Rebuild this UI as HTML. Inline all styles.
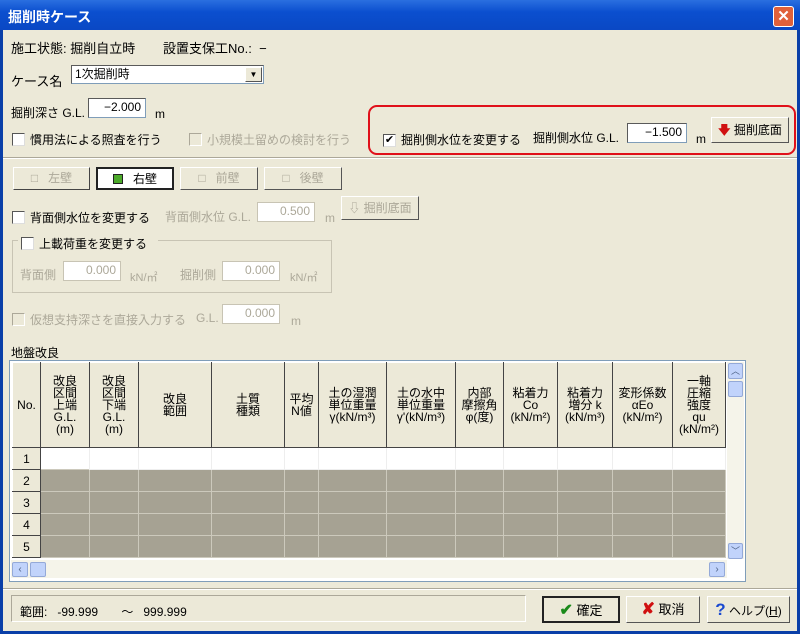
<!DOCTYPE html>
<html><head><meta charset="utf-8"><style>
*{box-sizing:border-box;margin:0;padding:0}
body{width:800px;height:634px;overflow:hidden;background:#0a3fa8;font-family:"Liberation Sans","Noto Sans CJK JP",sans-serif;font-size:12px;color:#000;position:relative}
.a{position:absolute}
#win{left:3px;top:30px;width:794px;height:601px;background:#ece9d8}
#title{left:0;top:0;width:800px;height:30px;background:linear-gradient(#2a6fe0,#0b4fcf 40%,#0a48c4);color:#fff;font-weight:bold;font-size:14px;padding:7px 0 0 8px}
.t{position:absolute;white-space:nowrap}
.g{color:#aca899}
.in{position:absolute;background:#fff;border:1px solid #7f9db9;border-top-color:#5a5a5a;border-left-color:#5a5a5a;text-align:right;padding-right:4px;font-size:12px;line-height:17px}
.in.d{background:#fff;color:#aca899;border-color:#c8c4b4}
.cb{position:absolute;width:13px;height:13px;background:#fff;border:1px solid #555;border-right-color:#ddd;border-bottom-color:#ddd}
.cb.d{background:#ece9d8;border-color:#aca899 #fff #fff #aca899}
.btn{position:absolute;background:#ece9d8;border:1px solid;border-color:#fff #555 #555 #fff;text-align:center}
table{border-collapse:collapse;position:absolute;left:12px;top:362px;table-layout:fixed}
td{border:1px solid #fff;height:22px;padding:0;font-size:11px}
th{background:#ece9d8;border:1px solid #444;border-top-color:#fff;border-left-color:#fff;font-weight:normal;font-size:12px;line-height:12px;height:85px;vertical-align:middle;text-align:center;overflow:hidden;white-space:nowrap}
.no{background:#ece9d8;border:1px solid #444;border-top-color:#fff;border-left-color:#fff;text-align:center;font-size:12px}
.gr{background:#a6a293;border-color:#ccc9bc}
.wh{background:#fff;border-color:#eee}
</style></head><body>
<div class="a" id="title">掘削時ケース</div>
<div class="a" style="left:773px;top:6px;width:21px;height:21px;background:#e0603a;border:1px solid #fff;border-radius:3px;color:#fff;font-weight:bold;text-align:center;font-size:15px;line-height:19px">✕</div>
<div class="a" id="win"></div>
<div class="t" style="left:11px;top:38px;font-size:13px">施工状態: 掘削自立時</div>
<div class="t" style="left:163px;top:38px;font-size:13px">設置支保工No.: &nbsp;−</div>
<div class="t" style="left:11px;top:71px;font-size:13px">ケース名</div>
<div class="in" style="left:71px;top:65px;width:193px;height:19px;text-align:left;padding-left:3px">1次掘削時</div>
<div class="btn" style="left:245px;top:67px;width:17px;height:15px;font-size:8px;line-height:13px">▼</div>
<div class="t" style="left:11px;top:104px">掘削深さ G.L.</div>
<div class="in" style="left:88px;top:98px;width:58px;height:20px">−2.000</div>
<div class="t" style="left:155px;top:107px">m</div>
<div class="cb" style="left:12px;top:133px"></div><div class="t" style="left:30px;top:131px;font-size:12px">慣用法による照査を行う</div>
<div class="cb d" style="left:189px;top:133px"></div><div class="t g" style="left:207px;top:131px;font-size:12px">小規模土留めの検討を行う</div>
<div class="a" style="left:368px;top:105px;width:428px;height:50px;border:2px solid #e0101a;border-radius:9px"></div>
<div class="cb" style="left:383px;top:134px;font-size:11px;line-height:11px;text-align:center">✔</div>
<div class="t" style="left:401px;top:131px;font-size:12px">掘削側水位を変更する</div>
<div class="t" style="left:533px;top:129px">掘削側水位 G.L.</div>
<div class="in" style="left:627px;top:123px;width:60px;height:20px">−1.500</div>
<div class="t" style="left:696px;top:132px">m</div>
<div class="btn" style="left:711px;top:117px;width:78px;height:26px;line-height:24px"><span style="color:#d01010;font-weight:bold">🡇</span> 掘削底面</div>
<div class="a" style="left:3px;top:157px;width:794px;height:2px;border-top:1px solid #aca899;border-bottom:1px solid #fff"></div>
<div class="btn g" style="left:13px;top:167px;width:77px;height:23px;line-height:21px;border-color:#fff #444 #444 #fff">□ &nbsp; 左壁</div>
<div class="btn" style="left:96px;top:167px;width:78px;height:23px;line-height:21px;border:2px solid #222;background:#fff"><span style="display:inline-block;width:10px;height:10px;background:#4caa2a;border:1px solid #222;vertical-align:-1px"></span> &nbsp; 右壁</div>
<div class="btn g" style="left:180px;top:167px;width:78px;height:23px;line-height:21px">□ &nbsp; 前壁</div>
<div class="btn g" style="left:264px;top:167px;width:78px;height:23px;line-height:21px">□ &nbsp; 後壁</div>
<div class="cb" style="left:12px;top:211px"></div><div class="t" style="left:30px;top:209px;font-size:12px">背面側水位を変更する</div>
<div class="t g" style="left:165px;top:208px">背面側水位 G.L.</div>
<div class="in d" style="left:257px;top:202px;width:58px;height:20px">0.500</div>
<div class="t g" style="left:325px;top:211px">m</div>
<div class="btn g" style="left:341px;top:196px;width:78px;height:24px;line-height:22px">⇩ 掘削底面</div>
<div class="a" style="left:12px;top:240px;width:320px;height:53px;border:1px solid #c8c4b4"></div>
<div class="a" style="left:18px;top:234px;width:140px;height:16px;background:#ece9d8"></div>
<div class="cb" style="left:21px;top:237px"></div><div class="t" style="left:39px;top:235px;font-size:12px">上載荷重を変更する</div>
<div class="t g" style="left:20px;top:266px">背面側</div>
<div class="in d" style="left:63px;top:261px;width:58px;height:20px">0.000</div>
<div class="t g" style="left:130px;top:269px;font-size:11px">kN/㎡</div>
<div class="t g" style="left:180px;top:266px">掘削側</div>
<div class="in d" style="left:222px;top:261px;width:58px;height:20px">0.000</div>
<div class="t g" style="left:290px;top:269px;font-size:11px">kN/㎡</div>
<div class="cb d" style="left:12px;top:313px"></div><div class="t g" style="left:30px;top:311px;font-size:12px">仮想支持深さを直接入力する</div>
<div class="t g" style="left:196px;top:311px">G.L.</div>
<div class="in d" style="left:222px;top:304px;width:58px;height:20px">0.000</div>
<div class="t g" style="left:291px;top:314px">m</div>
<div class="t" style="left:11px;top:344px">地盤改良</div>
<div class="a" style="left:9px;top:360px;width:737px;height:222px;border:1px solid #7f9db9;background:#fff"></div>
<table>
<colgroup><col style="width:28px"><col style="width:49px"><col style="width:49px"><col style="width:73px"><col style="width:73px"><col style="width:34px"><col style="width:68px"><col style="width:69px"><col style="width:48px"><col style="width:54px"><col style="width:55px"><col style="width:60px"><col style="width:53px"></colgroup>
<tr><th>No.</th><th>改良<br>区間<br>上端<br>G.L.<br>(m)</th><th>改良<br>区間<br>下端<br>G.L.<br>(m)</th><th>改良<br>範囲</th><th>土質<br>種類</th><th>平均<br>N値</th><th>土の湿潤<br>単位重量<br>γ(kN/m³)</th><th>土の水中<br>単位重量<br>γ'(kN/m³)</th><th>内部<br>摩擦角<br>φ(度)</th><th>粘着力<br>Co<br>(kN/m²)</th><th>粘着力<br>増分 k<br>(kN/m³)</th><th>変形係数<br>αEo<br>(kN/m²)</th><th>一軸<br>圧縮<br>強度<br>qu<br>(kN/m²)</th></tr>
<tr><td class="no">1</td><td class="wh" style="border:1px dotted #333"></td><td class="wh"></td><td class="wh"></td><td class="wh"></td><td class="wh"></td><td class="wh"></td><td class="wh"></td><td class="wh"></td><td class="wh"></td><td class="wh"></td><td class="wh"></td><td class="wh"></td></tr>
<tr><td class="no">2</td><td class="gr"></td><td class="gr"></td><td class="gr"></td><td class="gr"></td><td class="gr"></td><td class="gr"></td><td class="gr"></td><td class="gr"></td><td class="gr"></td><td class="gr"></td><td class="gr"></td><td class="gr"></td></tr>
<tr><td class="no">3</td><td class="gr"></td><td class="gr"></td><td class="gr"></td><td class="gr"></td><td class="gr"></td><td class="gr"></td><td class="gr"></td><td class="gr"></td><td class="gr"></td><td class="gr"></td><td class="gr"></td><td class="gr"></td></tr>
<tr><td class="no">4</td><td class="gr"></td><td class="gr"></td><td class="gr"></td><td class="gr"></td><td class="gr"></td><td class="gr"></td><td class="gr"></td><td class="gr"></td><td class="gr"></td><td class="gr"></td><td class="gr"></td><td class="gr"></td></tr>
<tr><td class="no">5</td><td class="gr"></td><td class="gr"></td><td class="gr"></td><td class="gr"></td><td class="gr"></td><td class="gr"></td><td class="gr"></td><td class="gr"></td><td class="gr"></td><td class="gr"></td><td class="gr"></td><td class="gr"></td></tr>
</table>
<div class="a" style="left:727px;top:362px;width:17px;height:197px;background:#f5f4ea"></div>
<div class="a" style="left:728px;top:363px;width:15px;height:16px;background:#c1d3fb;border:1px solid #94a9d8;border-radius:2px;font-size:9px;text-align:center;color:#4d6185">︿</div>
<div class="a" style="left:728px;top:381px;width:15px;height:16px;background:#c1d3fb;border:1px solid #94a9d8;border-radius:2px"></div>
<div class="a" style="left:728px;top:543px;width:15px;height:16px;background:#c1d3fb;border:1px solid #94a9d8;border-radius:2px;font-size:9px;text-align:center;color:#4d6185">﹀</div>
<div class="a" style="left:11px;top:560px;width:716px;height:18px;background:#f5f4ea"></div>
<div class="a" style="left:12px;top:562px;width:16px;height:15px;background:#c1d3fb;border:1px solid #94a9d8;border-radius:2px;font-size:10px;text-align:center;color:#4d6185;line-height:13px">‹</div>
<div class="a" style="left:30px;top:562px;width:16px;height:15px;background:#c1d3fb;border:1px solid #94a9d8;border-radius:2px"></div>
<div class="a" style="left:709px;top:562px;width:16px;height:15px;background:#c1d3fb;border:1px solid #94a9d8;border-radius:2px;font-size:10px;text-align:center;color:#4d6185;line-height:13px">›</div>
<div class="a" style="left:3px;top:588px;width:794px;height:2px;border-top:1px solid #aca899;border-bottom:1px solid #fff"></div>
<div class="a" style="left:11px;top:595px;width:515px;height:27px;border:1px solid;border-color:#aca899 #fff #fff #aca899"></div>
<div class="t" style="left:20px;top:603px">範囲: &nbsp; -99.999 &nbsp; &nbsp; &nbsp; 〜 &nbsp; 999.999</div>
<div class="btn" style="left:542px;top:596px;width:78px;height:27px;line-height:25px;border:2px solid #222;font-size:13px"><span style="color:#1a8a1a;font-weight:bold;font-size:16px">✔</span> 確定</div>
<div class="btn" style="left:626px;top:596px;width:74px;height:27px;line-height:25px;font-size:13px"><span style="color:#d01010;font-weight:bold;font-size:16px">✘</span> 取消</div>
<div class="btn" style="left:707px;top:596px;width:83px;height:27px;line-height:25px;font-size:12px"><span style="color:#1a4ad0;font-weight:bold;font-size:17px">?</span> ヘルプ(<u>H</u>)</div>
</body></html>
